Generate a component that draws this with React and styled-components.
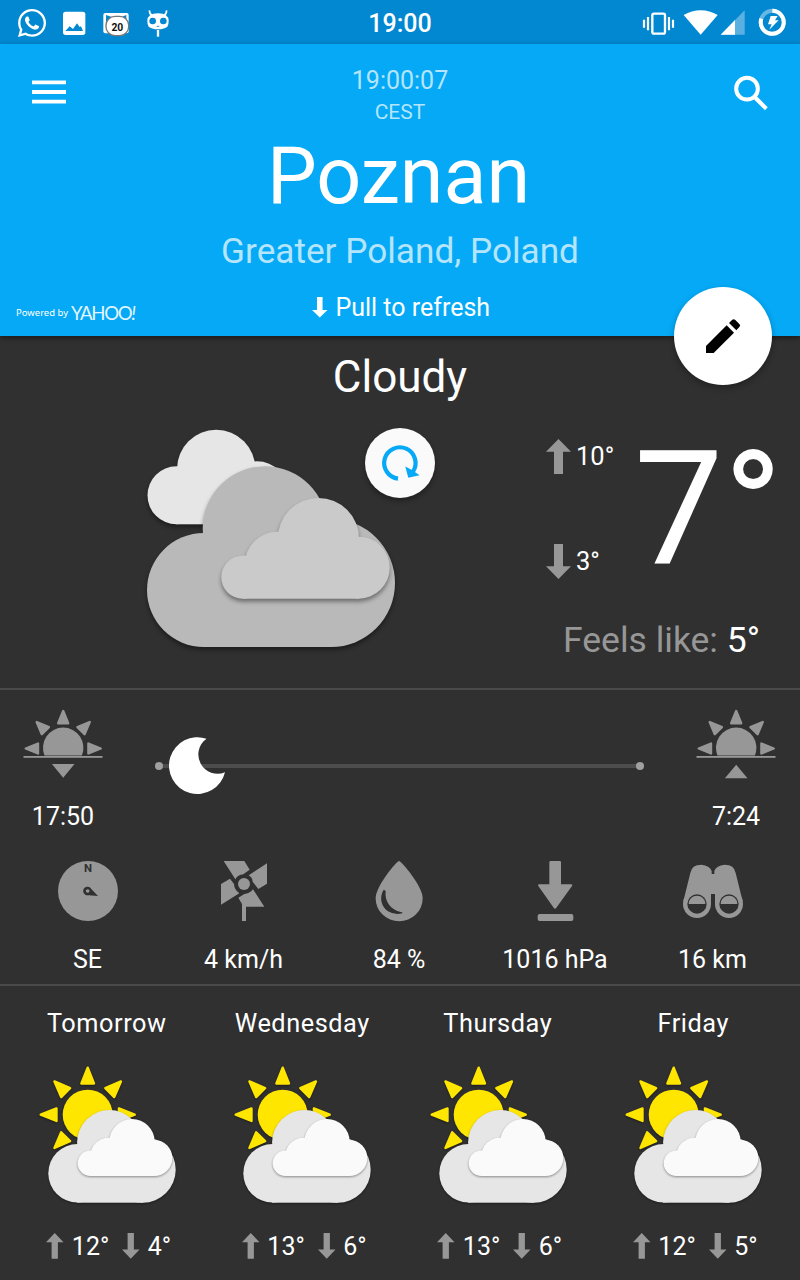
import React from "react";
import styled, { createGlobalStyle } from "styled-components";
import { FaWhatsapp } from "react-icons/fa";

const GREY = "#979797";
const DARK = "#303030";

const GlobalStyle = createGlobalStyle`
  * { box-sizing: border-box; }
  body { margin: 0; background: ${DARK}; overflow: hidden; }
  svg { display: block; flex: none; overflow: visible; }
`;

const Screen = styled.div`
  width: 800px;
  height: 1280px;
  overflow: hidden;
  display: flex;
  flex-direction: column;
  background: ${DARK};
  color: #fff;
  font-family: Roboto, "Liberation Sans", sans-serif;
  font-size: 25px;
`;

const Line = styled.div`
  font-size: ${(p) => p.$size || 25}px;
  line-height: ${(p) => p.$height}px;
  height: ${(p) => p.$height}px;
  letter-spacing: ${(p) => p.$spacing || 0}px;
  color: ${(p) => p.$color || "#fff"};
  text-align: ${(p) => p.$align || "center"};
  white-space: nowrap;
`;

const StatusBar = styled.header`
  flex: none;
  height: 44px;
  display: grid;
  grid-template-columns: 1fr 100px 1fr;
  align-items: center;
  background: #0288d1;
`;
const StatusLeft = styled.div`
  display: flex;
  align-items: center;
  padding-left: 16px;
`;
const StatusRight = styled.div`
  display: flex;
  justify-content: flex-end;
`;
const StatusTime = styled.div`
  font-size: 25px;
  font-weight: 500;
  line-height: 44px;
  text-align: center;
  padding-top: 2px;
`;

const Hero = styled.section`
  flex: none;
  position: relative;
  z-index: 1;
  height: 292px;
  padding-top: 19px;
  background: #05a9f6;
  box-shadow: 0 2px 5px rgba(0, 0, 0, 0.45);
`;
const HeroTop = styled.div`
  height: 65px;
  display: grid;
  grid-template-columns: 100px 1fr 100px;
`;
const IconButton = styled.button`
  border: 0;
  padding: ${(p) => (p.$end ? "13px 32px 0 0" : "16.5px 0 0 32px")};
  background: none;
  display: flex;
  align-items: flex-start;
  justify-content: ${(p) => (p.$end ? "flex-end" : "flex-start")};
`;
const City = styled.div`
  padding-right: 3px;
`;
const HeroBottom = styled.div`
  height: 59px;
  display: grid;
  grid-template-columns: 202px 1fr 200px;
  padding-top: 1px;
`;
const Attribution = styled.div`
  display: flex;
  align-items: center;
  padding: 12px 0 0 16px;
  color: #e2f5fe;
`;
const Powered = styled.span`
  width: 55px;
  font: 9.5px/16px "Noto Sans", sans-serif;
  white-space: nowrap;
  color: #fff;
`;
const Yahoo = styled.span`
  font: 400 18.6px/20px Lato, sans-serif;
  letter-spacing: -1.3px;
  white-space: nowrap;
`;
const Pull = styled.div`
  display: flex;
  align-items: center;
  justify-content: center;
  gap: 8px;
  height: 58px;
`;
const Fab = styled.button`
  position: absolute;
  right: 28px;
  bottom: -49px;
  width: 98px;
  height: 98px;
  border: 0;
  padding: 0;
  border-radius: 50%;
  background: #fff;
  display: flex;
  align-items: center;
  justify-content: center;
  box-shadow: 0 3px 6px rgba(0, 0, 0, 0.3);
`;

const Current = styled.section`
  flex: none;
  height: 354px;
  padding-top: 16px;
  border-bottom: 2px solid #4a4a4a;
`;
const CurrentBody = styled.div`
  display: grid;
  grid-template-columns: 546px 1fr;
`;
const Illustration = styled.div`
  position: relative;
  padding: 13px 0 0 130px;
`;
const RefreshButton = styled.button`
  position: absolute;
  left: 365px;
  top: 26px;
  width: 70px;
  height: 70px;
  border: 0;
  padding: 0;
  border-radius: 50%;
  background: #fafafa;
  display: flex;
  align-items: center;
  justify-content: center;
  box-shadow: 0 3px 5px rgba(0, 0, 0, 0.35);
`;
const Readings = styled.div`
  padding-top: 23px;
`;
const Temperatures = styled.div`
  display: flex;
  height: 160px;
`;
const Range = styled.div`
  width: 88px;
  padding-top: 11px;
  display: flex;
  flex-direction: column;
  gap: 65px;
`;
const RangeItem = styled.div`
  display: flex;
  align-items: center;
  gap: 5px;
  height: 40px;
  font-size: 25.5px;
`;
const Big = styled.div`
  padding-top: 5px;
`;
const Feels = styled.div`
  margin-top: 33px;
  padding-right: 40px;
`;
const Strong = styled.span`
  color: #fff;
`;

const SunTimes = styled.section`
  flex: none;
  height: 148px;
  display: grid;
  grid-template-columns: 127px 1fr 127px;
`;
const SunEvent = styled.div`
  display: flex;
  flex-direction: column;
  align-items: center;
  padding: 13px 1px 0 0;
`;

const Metrics = styled.section`
  flex: none;
  height: 148px;
  display: grid;
  grid-template-columns: repeat(5, 1fr);
  padding: 22px 11px 0 9px;
  border-bottom: 2px solid #4a4a4a;
`;
const Metric = styled.div`
  display: flex;
  flex-direction: column;
  align-items: center;
  gap: 16px;
  padding-left: ${(p) => p.$shift || 0}px;
`;

const Forecast = styled.section`
  flex: 1;
  display: grid;
  grid-template-columns: repeat(4, 1fr);
  padding: 18px 9px 0 9px;
`;
const Day = styled.div`
  display: flex;
  flex-direction: column;
  align-items: center;
`;
const DayArt = styled.div`
  padding-top: 16px;
`;
const DayRange = styled.div`
  display: flex;
  align-items: center;
  height: 40px;
  margin-top: 16px;
  padding-left: 4px;
`;
const DayTemp = styled.span`
  line-height: 42px;
  padding: ${(p) => (p.$last ? "2px 0 0 8px" : "2px 13px 0 8px")};
`;

const Arrow = ({ down, w = 25, h = 35, color = GREY }) => (
  <svg width={w} height={h} viewBox="0 0 75 105" preserveAspectRatio="none">
    <path
      transform={down ? "rotate(180 37.5 52.5)" : undefined}
      fill={color}
      d="M37.5 0L75 38H51V105H24V38H0Z"
    />
  </svg>
);

const Ray = ({ cx, cy, angle, tip, base, half, color }) => (
  <path
    transform={`rotate(${angle} ${cx} ${cy})`}
    fill={color}
    stroke={color}
    strokeWidth="2.4"
    strokeLinejoin="round"
    d={`M${cx} ${cy - tip + 2}L${cx + half - 1.2} ${cy - base - 1.2}H${cx - half + 1.2}Z`}
  />
);

const StatusIconsLeft = () => (
  <svg width="120" height="44" viewBox="144 0 360 132">
    <rect x="189" y="32" width="67" height="70" rx="8" fill="#fff" />
    <path d="M196 90L209 76L219 84L231 67L239 78L243 76L249 90Z" fill="#0288d1" />
    <rect x="310" y="36" width="76" height="61" rx="6" fill="#fff" />
    <path d="M318 42L336 48Q350 44 364 48L379 42V74H318Z" fill="#0288d1" />
    <rect x="318" y="46" width="68" height="58" rx="27" fill="#fff" stroke="#777" strokeWidth="4" />
    <text x="352" y="90" textAnchor="middle" fontFamily="Roboto, sans-serif" fontWeight="700" fontSize="31" fill="#111">
      20
    </text>
    <path d="M448 28Q449 40 456 42M500 28Q499 40 492 42" stroke="#fff" strokeWidth="5" fill="none" />
    <path d="M442 60Q442 37 474 37Q506 37 506 60Q506 72 502 77Q494 84 474 85Q454 84 446 77Q442 72 442 60Z" fill="#fff" />
    <circle cx="458" cy="60" r="10" fill="#0288d1" />
    <circle cx="490" cy="60" r="10" fill="#0288d1" />
    <path d="M470 76H478" stroke="#0288d1" strokeWidth="2.5" fill="none" />
    <path d="M474 87V107" stroke="#fff" strokeWidth="7" />
  </svg>
);

const StatusIconsRight = () => (
  <svg width="180" height="44" viewBox="0 0 540 132">
    <rect x="97" y="38" width="38" height="60" rx="5" fill="none" stroke="#fff" strokeWidth="7" />
    <path d="M72 56V80M84 48V88M147 48V88M159 56V80" stroke="#fff" strokeWidth="6.5" />
    <path d="M242 101L191 42Q215 28 242 28Q269 28 293 42Z" fill="#fff" />
    <path d="M374 28V101H302Z" fill="#fff" opacity="0.35" />
    <path d="M345 57V101H302Z" fill="#fff" />
    <circle cx="457" cy="64" r="34.5" fill="none" stroke="#fff" strokeWidth="12" opacity="0.4" />
    <path d="M457 29.5A34.5 34.5 0 1 1 424 53" fill="none" stroke="#fff" strokeWidth="12" />
    <path d="M452 45L473 45L465 58H476L448 86L455 70H444Z" fill="#fff" />
  </svg>
);

const MenuIcon = () => (
  <svg width="34" height="24" viewBox="0 0 102 70">
    <path d="M0 6H102M0 35H102M0 64H102" stroke="#fff" strokeWidth="11.5" />
  </svg>
);

const SearchIcon = () => (
  <svg width="34" height="34" viewBox="342 228 102 102">
    <circle cx="381" cy="266" r="32.5" fill="none" stroke="#fff" strokeWidth="12" />
    <path d="M403 288L412 290L443 322L435 331L403 299Z" fill="#fff" />
  </svg>
);

const PencilIcon = () => (
  <svg width="34" height="34" viewBox="1218 117 102 102">
    <path d="M1218 198L1280 136L1302 158L1241 219H1218Z" />
    <path d="M1287 129L1296 120Q1301 115 1306 120L1318 132Q1323 137 1318 141L1309 151Z" />
  </svg>
);

const RefreshIcon = () => (
  <svg width="70" height="70" viewBox="365 428 70 70">
    <path d="M398 478.6A15.7 15.7 0 1 1 413 471.6" fill="none" stroke="#05a9f6" strokeWidth="4.2" />
    <path d="M405.3 466.5L411 469.6L415.6 472.6L419.5 475.2L408.3 477.8Z" fill="#05a9f6" />
  </svg>
);

const Shadowed = styled.g`
  filter: drop-shadow(0 ${(p) => p.$y}px ${(p) => p.$blur}px rgba(0, 0, 0, 0.4));
`;

const CloudyArt = () => (
  <svg width="280" height="245" viewBox="130 415 280 245">
    <Shadowed $y={3.2} $blur={1.9} fill="#e6e6e6">
      <circle cx="176.5" cy="495.3" r="29" />
      <circle cx="216.2" cy="469" r="39.2" />
      <circle cx="257" cy="492.8" r="31.5" />
      <rect x="176.5" y="469" width="78.9" height="55.3" />
    </Shadowed>
    <Shadowed $y={3.2} $blur={1.9} fill="#b9b9b9">
      <circle cx="204" cy="590" r="57" />
      <circle cx="265" cy="528.5" r="62.3" />
      <circle cx="331" cy="583" r="64" />
      <rect x="202.7" y="533" width="129" height="114" />
    </Shadowed>
    <Shadowed $y={3.2} $blur={1.9} fill="#cacaca">
      <circle cx="242.8" cy="577.2" r="21.5" />
      <circle cx="277.3" cy="564.2" r="32.5" />
      <circle cx="318.4" cy="538.5" r="40.6" />
      <circle cx="358.7" cy="567.7" r="31" />
      <rect x="242.8" y="555.7" width="116" height="43" />
      <rect x="278" y="538" width="81" height="30" />
    </Shadowed>
  </svg>
);

const PartlyCloudyArt = () => (
  <svg width="140" height="150" viewBox="37 1060 140 150">
    <Shadowed $y={1.6} $blur={1.1} fill="#ffe600">
      <circle cx="87.7" cy="1114.7" r="25" />
      {[0, 45, 90, 225, 270, 315].map((a) => (
        <Ray key={a} cx={87.7} cy={1114.7} angle={a} tip={49} base={30} half={7.5} color="#ffe600" />
      ))}
    </Shadowed>
    <Shadowed $y={1.6} $blur={1.1} fill="#e6e6e6">
      <circle cx="77.6" cy="1173.3" r="29.3" />
      <circle cx="109.4" cy="1142.3" r="32.3" />
      <circle cx="142.7" cy="1169.7" r="33" />
      <rect x="77.1" y="1144" width="66" height="58.7" />
    </Shadowed>
    <Shadowed $y={1.6} $blur={1.1} fill="#fafafa">
      <circle cx="90.4" cy="1163.3" r="12.7" />
      <circle cx="108.3" cy="1155.8" r="18" />
      <circle cx="132" cy="1141.7" r="22.7" />
      <circle cx="154.3" cy="1158" r="18" />
      <rect x="90.4" y="1151" width="64" height="25" />
      <rect x="109.3" y="1141" width="45.4" height="17" />
    </Shadowed>
  </svg>
);

const SunHorizon = ({ rising }) => (
  <svg width="80" height="84" viewBox="23.5 703 80 84">
    <path d="M45 755.4A20.2 20.2 0 1 1 82.4 755.4Z" fill={GREY} />
    {[-90, -45, 0, 45, 90].map((a) => (
      <Ray key={a} cx={63.7} cy={748.5} angle={a} tip={39.5} base={24} half={6.2} color={GREY} />
    ))}
    <rect x="24" y="756" width="79" height="1.8" fill={GREY} />
    <path d={rising ? "M52.4 778.3H75L63.7 764.7Z" : "M52.4 764H75L63.7 777.7Z"} fill={GREY} />
  </svg>
);

const MoonTrack = () => (
  <svg width="546" height="148" viewBox="127 690 546 148">
    <path d="M159 766H640" stroke="#4d4d4d" strokeWidth="4" />
    <circle cx="159" cy="766" r="4" fill="#a0a0a0" />
    <circle cx="640" cy="766" r="4" fill="#a0a0a0" />
    <path d="M206.5 738.7A28.4 28.4 0 1 0 225 772.3A19.3 19.3 0 0 1 206.5 738.7Z" fill="#fff" />
  </svg>
);

const CompassIcon = () => (
  <svg width="60" height="62" viewBox="82 45 180 186">
    <circle cx="172" cy="138" r="90" fill={GREY} />
    <text x="172" y="81" textAnchor="middle" fontFamily="Roboto, sans-serif" fontWeight="700" fontSize="34" fill={DARK}>
      N
    </text>
    <path d="M176 126L202 153L165 150Z" fill={DARK} />
    <circle cx="170" cy="138" r="12.5" fill={DARK} />
    <circle cx="171" cy="138" r="5.5" fill={GREY} />
  </svg>
);

const PinwheelIcon = () => (
  <svg width="46" height="62" viewBox="570 45 138 186">
    <g fill={GREY}>
      <path d="M578 48H640L656 74L637 88Q620 90 613 103Z" />
      <path d="M708 55V116L682 132L665 110Q664 97 653 91Z" />
      <path d="M570 117L597 101L609 117Q610 135 625 145L570 179Z" />
      <path d="M666 133L700 185H645V228H633V177L622 158L640 147Q656 146 666 133Z" />
      <circle cx="639" cy="117" r="18" />
    </g>
  </svg>
);

const DropIcon = () => (
  <svg width="48" height="62" viewBox="75 45 144 186">
    <path d="M147 48C153 48 218 122 218 160A70.5 69 0 0 1 77 160C77 122 141 48 147 48Z" fill={GREY} />
    <path d="M101 134C86 158 95 186 114 199Q134 211 157 205Q159 201 152 201C123 195 103 170 107 139Q105 134 101 134Z" fill={DARK} />
  </svg>
);

const PressureIcon = () => (
  <svg width="36" height="62" viewBox="563 45 108 186">
    <g fill={GREY}>
      <path d="M604 48H631Q635 48 635 52V118H666Q671 119 668 123L621 188Q617 194 613 188L567 123Q564 119 569 118H600V52Q600 48 604 48Z" />
      <rect x="565" y="207" width="107" height="21" rx="6" />
    </g>
  </svg>
);

const BinocularsIcon = () => (
  <svg width="60" height="62" viewBox="190 510 180 186">
    <g fill={GREY}>
      <path d="M191 634L212 549Q216 524 245 524Q270 526 276 543V552H284V543Q290 526 315 524Q344 524 348 549L369 634L328 643H286V612H274V643H232Z" />
      <circle cx="232" cy="642" r="42" />
      <circle cx="328" cy="642" r="42" />
    </g>
    {[232, 328].map((x) => (
      <g key={x}>
        <circle cx={x} cy="642" r="29" fill={DARK} />
        <path d={`M${x - 25} 642A25 25 0 0 1 ${x + 25} 642Z`} fill={GREY} />
      </g>
    ))}
  </svg>
);

const metrics = [
  { icon: <CompassIcon />, value: "SE", shift: 1 },
  { icon: <PinwheelIcon />, value: "4 km/h", shift: 1 },
  { icon: <DropIcon />, value: "84 %" },
  { icon: <PressureIcon />, value: "1016 hPa" },
  { icon: <BinocularsIcon />, value: "16 km", shift: 3 },
];

const days = [
  { name: "Tomorrow", high: "12°", low: "4°" },
  { name: "Wednesday", high: "13°", low: "6°" },
  { name: "Thursday", high: "13°", low: "6°" },
  { name: "Friday", high: "12°", low: "5°" },
];

export default function App() {
  return (
    <Screen>
      <GlobalStyle />
      <StatusBar>
        <StatusLeft>
          <FaWhatsapp size={32} />
          <StatusIconsLeft />
        </StatusLeft>
        <StatusTime>19:00</StatusTime>
        <StatusRight>
          <StatusIconsRight />
        </StatusRight>
      </StatusBar>

      <Hero>
        <HeroTop>
          <IconButton aria-label="Menu">
            <MenuIcon />
          </IconButton>
          <div>
            <Line $height={36} $color="#b4e5fc">19:00:07</Line>
            <Line $height={26} $size={21} $color="#b4e5fc">CEST</Line>
          </div>
          <IconButton $end aria-label="Search">
            <SearchIcon />
          </IconButton>
        </HeroTop>
        <City>
          <Line $height={97} $size={79}>Poznan</Line>
        </City>
        <Line $height={52} $size={35.2} $color="#b4e5fc">Greater Poland, Poland</Line>
        <HeroBottom>
          <Attribution>
            <Powered>Powered by</Powered>
            <Yahoo>
              YAHOO<i>!</i>
            </Yahoo>
          </Attribution>
          <Pull>
            <Arrow down w={15.5} h={20.5} color="#fff" />
            <span>Pull to refresh</span>
          </Pull>
        </HeroBottom>
        <Fab aria-label="Edit">
          <PencilIcon />
        </Fab>
      </Hero>

      <Current>
        <Line $height={50} $size={44}>Cloudy</Line>
        <CurrentBody>
          <Illustration>
            <CloudyArt />
            <RefreshButton aria-label="Refresh">
              <RefreshIcon />
            </RefreshButton>
          </Illustration>
          <Readings>
            <Temperatures>
              <Range>
                <RangeItem>
                  <Arrow />
                  <span>10°</span>
                </RangeItem>
                <RangeItem>
                  <Arrow down />
                  <span>3°</span>
                </RangeItem>
              </Range>
              <Big>
                <Line $height={160} $size={159} $align="left">7°</Line>
              </Big>
            </Temperatures>
            <Feels>
              <Line $height={44} $size={35.5} $align="right" $color={GREY}>
                Feels like: <Strong>5°</Strong>
              </Line>
            </Feels>
          </Readings>
        </CurrentBody>
      </Current>

      <SunTimes>
        <SunEvent>
          <SunHorizon />
          <Line $height={59}>17:50</Line>
        </SunEvent>
        <MoonTrack />
        <SunEvent>
          <SunHorizon rising />
          <Line $height={59}>7:24</Line>
        </SunEvent>
      </SunTimes>

      <Metrics>
        {metrics.map((m) => (
          <Metric key={m.value} $shift={m.shift}>
            {m.icon}
            <Line $height={44}>{m.value}</Line>
          </Metric>
        ))}
      </Metrics>

      <Forecast>
        {days.map((d) => (
          <Day key={d.name}>
            <Line $height={40} $size={25.3} $spacing={0.55}>{d.name}</Line>
            <DayArt>
              <PartlyCloudyArt />
            </DayArt>
            <DayRange>
              <Arrow w={17.5} h={25.7} />
              <DayTemp>{d.high}</DayTemp>
              <Arrow down w={17.5} h={25.7} />
              <DayTemp $last>{d.low}</DayTemp>
            </DayRange>
          </Day>
        ))}
      </Forecast>
    </Screen>
  );
}
